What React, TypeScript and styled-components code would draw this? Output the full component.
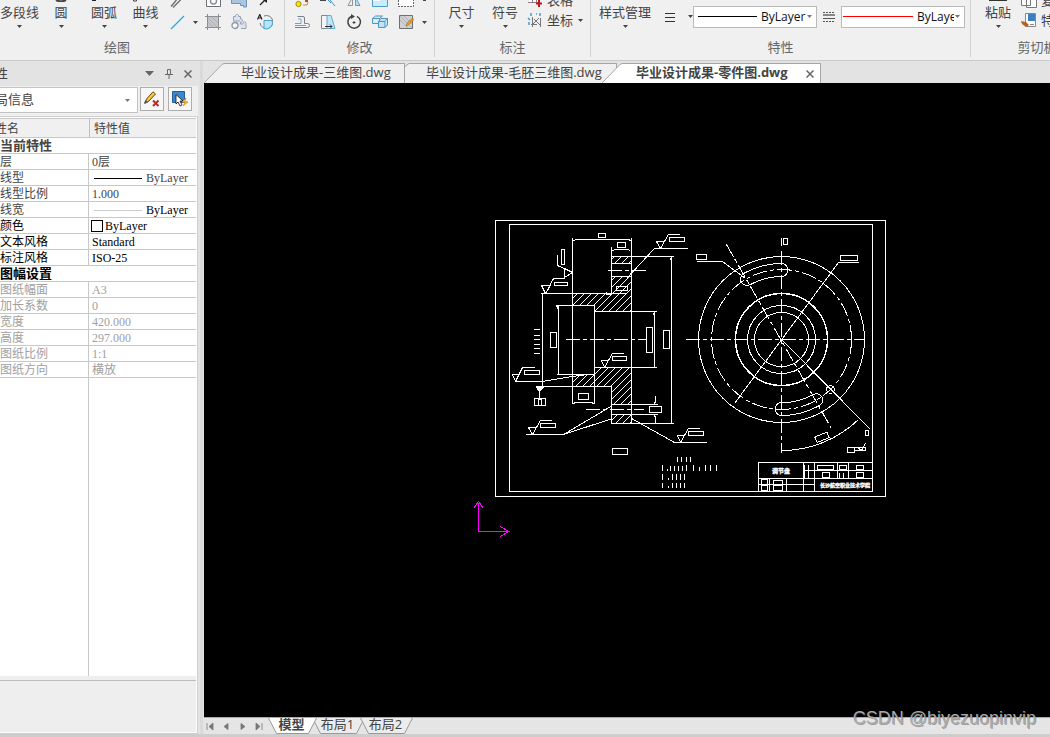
import React from "react";
import styled, { createGlobalStyle } from "styled-components";

const GlobalStyle = createGlobalStyle`
  * { box-sizing: border-box; }
  body { margin: 0; overflow: hidden; }
  button, select { font: inherit; color: inherit; margin: 0; padding: 0; border: 0; background: none; }
  svg { display: block; flex: none; }
`;

const Page = styled.div`
  position: relative;
  display: flex;
  flex-direction: column;
  height: 100vh;
  background: #f0f0f0;
  color: #444;
  font-family: "Open Sans", "Noto Sans CJK SC", sans-serif;
  font-size: 13px;
  line-height: 20px;
`;

/* ---------- ribbon ---------- */

const Ribbon = styled.header`
  display: flex;
  flex: none;
  height: 61px;
  overflow: hidden;
  border-bottom: 1px solid #cacaca;
`;

const Group = styled.section<{ $width?: number }>`
  display: flex;
  flex-direction: column;
  flex: ${(p) => (p.$width ? `0 0 ${p.$width}px` : "1 0 132px")};
  overflow: hidden;
  height: 57px;
  border-right: ${(p) => (p.$width ? "1px solid #d0d0d0" : "0")};
`;

const Tools = styled.div<{ $pad?: number }>`
  display: flex;
  height: 37px;
  padding-left: ${(p) => p.$pad ?? 0}px;
`;

const GroupTitle = styled.h2<{ $inset?: number }>`
  margin: 0;
  padding-right: ${(p) => p.$inset ?? 0}px;
  font-size: 13px;
  font-weight: 400;
  line-height: 20px;
  text-align: center;
  white-space: nowrap;
  color: #666;
`;

const BigButton = styled.button<{ $width: number }>`
  display: flex;
  flex-direction: column;
  align-items: center;
  width: ${(p) => p.$width}px;
  height: 37px;
  white-space: nowrap;
  line-height: 20px;

  & > svg:first-child { height: 2px; }
  & > svg:last-child { margin-top: 3px; }
`;

const IconGrid = styled.div<{ $columns: string }>`
  display: grid;
  grid-template-columns: ${(p) => p.$columns};
  grid-template-rows: 12px 20px;
`;

const IconButton = styled.button<{ $top?: boolean }>`
  display: flex;
  justify-content: center;
  align-items: ${(p) => (p.$top ? "flex-start" : "center")};
  min-width: 0;
  overflow: hidden;
`;

const Rows = styled.div`
  display: grid;
  grid-template-rows: 10px 20px;
  align-items: end;
`;

const RowButton = styled.button`
  display: flex;
  align-items: center;
  gap: 4px;
  height: 20px;
  white-space: nowrap;
`;

const PropertyTools = styled.div`
  display: flex;
  align-items: center;
  height: 33px;
`;

const Combo = styled.label<{ $pad: number }>`
  display: flex;
  align-items: center;
  width: 124px;
  height: 22px;
  padding: 0 4px 0 ${(p) => p.$pad}px;
  border: 1px solid #bababa;
  background: #fff;
  color: #111;
  font-size: 12px;

  & > svg:first-child { margin-right: 4px; }
`;

const ComboSelect = styled.select`
  flex: 1;
  min-width: 0;
  height: 20px;
  margin-right: 1px;
  appearance: none;
  outline: 0;
  overflow: hidden;
`;

const Spacer = styled.span<{ $width: number }>`
  flex: 0 0 ${(p) => p.$width}px;
  display: flex;
  justify-content: center;
`;

const Caret = ({ color = "#444" }: { color?: string }) => (
  <svg width="5" height="3" viewBox="0 0 5 3">
    <path d="M0 0h5L2.500 3z" fill={color} />
  </svg>
);

type IconProps = { h?: number; children?: React.ReactNode; w?: number };
const Icon = ({ w = 16, h = 16, children }: IconProps) => (
  <svg width={w} height={h} viewBox={`0 0 ${w} ${h}`} fill="none" stroke="#6a7078">
    {children}
  </svg>
);

const drawTop = [
  <Icon h={8}><path d="M1 6.500 6.500 0M3 7.500 10.500 0" strokeWidth="1.400" /></Icon>,
  <span />,
  <Icon h={8}><path d="M1.500 0v6.500h14V0" fill="#fff" /><circle cx="8.500" cy="1" r="3" stroke="#8a9098" strokeWidth="1.500" /></Icon>,
  <Icon h={8}><path d="M0 0h16v3H0z" fill="#9fbad0" stroke="none" /><path d="M.5 0v3.500h9V5.500h3V7h3V0" fill="#a9c6de" stroke="#6d94b5" /></Icon>,
  <Icon h={8}><path d="M3 5 8 0" stroke="#222" strokeWidth="1.300" /><path d="M6 0h4v3z" fill="#222" stroke="none" /></Icon>,
];

const drawBottom = [
  <Icon><path d="M1 15 14 2" stroke="#29a8e0" strokeWidth="1.300" /></Icon>,
  <Caret />,
  <Icon>
    <path d="M2.500 2.500h11v11h-11z" fill="#c3c6ca" stroke="#777" />
    <path d="M0 2.500h16M0 13.500h16M2.500 0v16M13.500 0v16" stroke="#8b8e92" />
    <path d="m3 8 5 5M3 4l9 9M7 3l6 6" stroke="#a4a8ad" strokeWidth=".7" />
  </Icon>,
  <Icon>
    <path d="M2.500 7V2.500h2a1.600 1.600 0 1 1 3 0h2V5a1.600 1.600 0 1 1 0 3v2h2.500a1.600 1.600 0 1 1 3 0v4.500H10M2.500 7H9" fill="#dde3ee" stroke="#98a2b2" />
    <circle cx="4" cy="11.500" r="3" fill="#f5f7fa" stroke="#8e98a6" strokeWidth="1.300" />
  </Icon>,
  <Icon>
    <path d="M7 2a6.500 6.500 0 1 1-4 7" stroke="#777" />
    <path d="M7 6.500h8.200A6.500 6.500 0 0 1 7 14.700z" fill="#b8e4f7" stroke="#4aa3cf" />
    <path d="M.5 5.500 2.800.5 5 5.500M1.500 4h3" stroke="#222" strokeWidth="1.200" />
  </Icon>,
];

const modifyTop = [
  <Icon h={8}><circle cx="4.500" cy="4" r="2.600" fill="#ffe600" stroke="#a08a10" /><path d="M9 5h4l1-3" stroke="#c98b2b" /><path d="M11 0h3v2h-3z" fill="#b34a1a" stroke="none" /></Icon>,
  <Icon h={8}><path d="M0 .5h6" stroke="#444" /><path d="m8 0 3 3M10 0l5 6" stroke="#3f8fca" /></Icon>,
  <Icon h={8}><path d="M6.500 0v5.500H2L5 0" stroke="#8c949c" /><path d="M9.500 0v5.500H14L11 0" fill="#b9dcf1" stroke="#5b9dcb" /></Icon>,
  <Icon h={8}><path d="M.5 0v6.500h15V0" fill="#c9ecfb" stroke="#4e9cc8" /><path d="M1 .5h7" stroke="#fff" /></Icon>,
  <Icon h={8}><path d="M.5 0v6.500h15V0" fill="#fff" stroke="#666" strokeDasharray="2 1" /></Icon>,
  <svg width="5" height="1"><path d="M1 0h3v1H1z" fill="#444" /></svg>,
];

const modifyBottom = [
  <Icon>
    <path d="M1 13.500h12.500a2 2 0 0 0 0-4H10.500V4a1.500 1.500 0 0 0-1.500-1.500H3.500" stroke="#777f88" />
    <path d="M1 11.500h11M1 9.500h6V5H4" stroke="#6aa6d4" />
  </Icon>,
  <Icon>
    <path d="M1.500 1.500h8v13h-8z" stroke="#888" fill="#f4f4f4" />
    <path d="M7 1.500h4l4 13H7z" fill="#c3e6f6" stroke="#62a9d0" />
    <path d="M5 12.500h7m-2-2 2 2-2 2" stroke="#333" />
  </Icon>,
  <Icon>
    <path d="M5 2.500A6.300 6.300 0 1 0 11 2.300" stroke="#444" strokeWidth="1.500" />
    <path d="m5 0 4 2.500L5 5z" fill="#444" stroke="none" />
    <path d="M8 7v3M6.500 8.500h3" stroke="#444" />
  </Icon>,
  <Icon>
    <path d="M.5 4.500h7v5h-7zM.5 4.500l3-2.500h7l-3 2.500" fill="#d6eef9" stroke="#4e94bd" />
    <path d="M6.500 7.500h6.500v6H6.500zM6.500 7.500l2.500-3h6.500l-2.500 3M15.500 4.500v6.500l-2.500 2.500" fill="#bde4f6" stroke="#4e94bd" />
  </Icon>,
  <Icon>
    <path d="M1.500 1.500h13v13h-13z" fill="#cfd1d3" stroke="#6c6f73" />
    <path d="m2 6 8 8M2 2l12 12M6 2l8 8" stroke="#a9acb0" strokeWidth=".8" />
    <path d="m8 12 1-3 5.500-5 1.500 1.500L10.500 11z" fill="#e59a2e" stroke="#b06d12" strokeWidth=".6" />
  </Icon>,
  <Caret />,
];

/* ---------- work area ---------- */

const Body = styled.div`
  display: flex;
  flex: 1;
  min-height: 0;
  background: #e3e3e3;
`;

const Panel = styled.aside`
  display: flex;
  flex-direction: column;
  flex: none;
  width: 198px;
  margin-right: 2px;
`;

const Gutter = styled.div`
  flex: 0 0 3px;
  margin-right: 1px;
  background: #dadada;
`;

const PanelTitle = styled.div`
  display: flex;
  align-items: center;
  flex: none;
  height: 25px;
  padding-right: 1px;
  line-height: 24px;

  & > span { flex: 1; height: 25px; margin-left: -5px; }
`;

const PanelButton = styled.button`
  display: flex;
  align-items: center;
  justify-content: center;
  width: 19px;
  height: 20px;
`;

const PanelTools = styled.div`
  display: flex;
  flex: none;
  height: 30px;
  padding-top: 1px;
  background: #f0f0f0;
`;

const ObjectCombo = styled.label`
  display: flex;
  align-items: center;
  width: 138px;
  height: 26px;
  padding-right: 7px;
  margin-right: 2px;
  border: 1px solid #c3c3c3;
  border-left: 0;
  background: #fff;

  & > select {
    flex: 1;
    min-width: 0;
    height: 24px;
    padding-bottom: 2px;
    appearance: none;
    text-indent: -5px;
    outline: 0;
  }
`;

const ToolButton = styled.button`
  display: flex;
  align-items: center;
  justify-content: center;
  width: 24px;
  height: 24px;
  margin-right: 4px;
  border: 1px solid #adadad;
  background: #f7f7f7;
`;

const Sheet = styled.div`
  display: flex;
  flex-direction: column;
  flex: 1;
  min-height: 0;
  padding: 1px 1px 1px 0;
  border: 1px solid #cfcfcf;
  border-left: 0;
  background: #fff;
`;

const PropTable = styled.table`
  width: 100%;
  table-layout: fixed;
  border-spacing: 0;
  font-family: "Liberation Serif", "Noto Sans CJK SC", serif;
  font-size: 12px;
  line-height: 14px;
  white-space: nowrap;

  th, td { padding: 1px 0 0; text-align: left; overflow: hidden; }
  thead th {
    height: 20px;
    border-top: 1px solid #c8c8c8;
    border-bottom: 1px solid #c8c8c8;
    background: #f0f0f0;
    font-weight: 400;
  }
  thead th:first-child { width: 90px; border-right: 1px solid #c0c0c0; text-indent: -5px; }
  thead th:last-child { padding-left: 4px; }
`;

const PropRow = styled.tr<{ $tone: string }>`
  color: ${(p) => p.$tone};

  & > * { height: 16px; border-bottom: 1px solid #c8c8c8; font-weight: 400; }
  & > th[colspan] { font-weight: 700; font-size: 13px; }
  & > td { padding-left: 2px; }
`;

const Cell = styled.span`
  display: block;
  width: 89px;
  height: 15px;
  margin-top: -1px;
  padding-top: 1px;
  border-right: 1px solid #c8c8c8;
`;

const Value = styled.span<{ $tone?: string }>`
  display: flex;
  align-items: center;
  height: 14px;
  gap: 4px;
  color: ${(p) => p.$tone ?? "inherit"};
`;

const Swatch = styled.span`
  width: 12px;
  height: 12px;
  margin: 0 -2px 0 -1px;
  border: 1px solid #000;
`;

const Rest = styled.div`
  flex: 1;
  width: 89px;
  border-right: 1px solid #c8c8c8;
`;

const Description = styled.div`
  flex: 0 0 56px;
  padding-top: 4px;
  background: #eee;

  &::before { content: ""; display: block; border-top: 1px solid #bdbdbd; }
`;

const Main = styled.main`
  display: flex;
  flex-direction: column;
  flex: 1;
  min-width: 0;
`;

const TabBar = styled.nav`
  display: flex;
  flex: none;
  height: 22px;
  padding-top: 2px;
`;

const Tab = styled.button<{ $active?: boolean; $width: number; $overlap?: number }>`
  display: flex;
  width: ${(p) => p.$width}px;
  height: 20px;
  margin-left: ${(p) => -(p.$overlap ?? 0)}px;
  position: relative;
  font-weight: ${(p) => (p.$active ? 700 : 400)};
  line-height: 16px;
  white-space: nowrap;
`;

const TabFace = styled.span<{ $active?: boolean; $pad: number }>`
  display: flex;
  align-items: flex-start;
  justify-content: space-between;
  flex: 1;
  height: 20px;
  padding: 0 6px 0 ${(p) => p.$pad}px;
  border-top: 1px solid #a6a6a6;
  border-right: 1px solid #a6a6a6;
  background: ${(p) => (p.$active ? "#fff" : "#f0f0f0")};

  & > svg { margin-top: 6px; }
`;

const Canvas = styled.div`
  display: flex;
  flex: 1;
  min-height: 0;
  background: #000;

  & > svg { flex: 1; min-width: 0; height: 100%; }
`;

const SheetBar = styled.nav`
  display: flex;
  flex: none;
  height: 17px;
  border-top: 1px solid #aaa;
  background: #e5e5e5;
`;

const PageButtons = styled.div`
  display: flex;
  width: 64px;
`;

const NavButton = styled.button`
  display: flex;
  align-items: center;
  flex: 1;
  padding-left: 2px;
  height: 17px;
`;

const SheetTab = styled.button<{ $active?: boolean; $width: number }>`
  position: relative;
  z-index: ${(p) => (p.$active ? 1 : 0)};
  width: ${(p) => p.$width}px;
  height: 16px;
  margin-right: -5px;
  padding-right: 2px;
  font-weight: ${(p) => (p.$active ? 700 : 400)};
  line-height: 12px;

  & > svg { position: absolute; left: 0; top: 0; }
  & > span { position: relative; display: block; height: 16px; }
`;

const BottomEdge = styled.footer`
  flex: 0 0 3px;
  background: #cdcdcd;
`;

const Watermark = styled.div`
  position: absolute;
  right: 14px;
  bottom: 8px;
  font-family: "Liberation Sans", sans-serif;
  font-size: 18px;
  line-height: 22px;
  color: #a8a8a8;
  text-shadow: 1px 1px 0 rgba(90, 90, 90, 0.5);
`;

/* ---------- drawing ---------- */

type Box = [number, number, number, number];

const boxes: Box[] = [
  [495, 220, 390, 276], [509, 224, 363, 267],
  [598, 233, 7, 4], [617, 242, 8, 5], [561, 249, 3, 15], [554, 282, 13, 3], [669, 237, 15, 4],
  [616, 286, 11, 4], [550, 332, 6, 15], [646, 327, 6, 25], [663, 330, 6, 18], [612, 356, 14, 4],
  [524, 370, 15, 4], [534, 398, 11, 7], [538, 399, 3, 6], [578, 393, 10, 6], [649, 406, 12, 6],
  [540, 423, 15, 4], [688, 431, 15, 4], [612, 448, 15, 6],
  [696, 254, 10, 5], [840, 255, 17, 5], [783, 238, 4, 6], [865, 430, 3, 5], [847, 447, 7, 5], [854, 447, 11, 3],
  [817, 465, 16, 4], [839, 465, 7, 4], [856, 465, 7, 4], [822, 472, 7, 5], [856, 472, 7, 5],
  [761, 479, 6, 5], [773, 480, 9, 4], [761, 485, 6, 5], [773, 485, 9, 5],
];

const lines = [
  // flange section outline and extension lines
  "M572 237V403M631 237V423M611 246V293M611 386V423M594 305V403M542 293V386M558 305V374",
  "M671 256V423M654 311V367M573 240l3-1H627l4 1M612 250l3-1H627l3 1",
  "M611 256H673M611 263H631M611 276H631M540 293H626M594 311H656M556 305H594M556 374H594",
  "M535 386H611M594 367H656M611 404H657M611 414H657M611 423H673M572 403l4-1H590l4 1",
  "M655 395v5l-1 4M655 423v-5l-1-4M606 291v3H611M558 309l-2-4M670 260l1-4M653 315l1-4",
  // surface finish symbols and leaders
  "M557 254V265L572 272M564 268 572 272 564 277Z",
  "M541 285H550L545 293ZM545 293 553 278H564",
  "M656 241H664L660 248ZM660 248 668 234H679M687 248H654L626 278",
  "M601 360H608L604 367ZM604 367 612 353H623",
  "M512 374H519L515 381ZM515 381 522 367H534M515 381H541L572 376 587 374",
  "M528 427H536L532 434ZM532 434 540 420H551M525 434H563L612 405M563 434 612 418",
  "M677 435H684L680 442ZM680 442 688 428H699M706 442H674L631 418",
  "M539 387V398M533 329h6M533 335h6M533 339h6M533 344h6M533 348h6M533 353h6",
  // notes
  "M677 456v5M681 456v5M686 456v5M690 456v5",
  "M662 464v6M667 468v2M670 465v5M674 465v5M678 465v5M682 465v5M686 464v6M693 464v6M699 466v4M705 464v6M710 464v6M716 464v6",
  "M662 473v6M668 477v2M672 473v6M676 473v6M680 473v6M684 473v6",
  "M662 482v5M668 485v2M672 482v5M676 482v5M680 482v5M684 482v5",
  // front view leaders
  "M696 261H722L745 278M858 262H838L734 403M781 339 870 429M781 450A111 111 0 0 0 858 419M865 443l-4 7-4-3",
  // slots
  "M743 273A76 76 0 0 1 781 263A6 6 0 0 1 781 276A63 63 0 0 0 750 284A6 6 0 0 1 743 273",
  "M781 402A63 63 0 0 0 813 394A6 6 0 0 1 819 405A76 76 0 0 1 781 415A6 6 0 0 1 781 402",
  // title block
  "M758 491V462H872M758 478H872M758 484H814M803 462V491M814 462V491M803 470H872M837 462V478M848 462V478",
  "M804 464v13M808 464v13M839 472v5M843 472v5M769 478V491M786 478V491",
];

// 45 degree section lines, seven units apart, clipped to the cut faces
const hatch = Array.from({ length: 36 }, (_, i) => {
  const x = 404 + i * 7;
  return `M${x} 424L${x + 168} 256`;
}).join("");

const Drawing = () => (
  <svg viewBox="204 83 846 634" role="img" aria-label="零件图" shapeRendering="crispEdges">
    <defs>
      <clipPath id="cut">
        <path d="M572 293H611V276H631V311H594V305H572ZM611 256H631V263H611ZM611 414H631V423H611ZM572 374H594V367H631V404H611V386H572Z" />
      </clipPath>
    </defs>
    <g transform="translate(.5 .5)" fill="none" stroke="#fff">
      <path d={hatch} clipPath="url(#cut)" />
      {boxes.map(([x, y, w, h]) => (
        <rect key={`${x}-${y}`} x={x} y={y} width={w} height={h} />
      ))}
      {lines.map((d) => (
        <path key={d} d={d} />
      ))}
      <path d="M536 387H543L539 391Z" fill="#fff" />
      <circle cx="781" cy="339" r="83" />
      <circle cx="781" cy="339" r="70" strokeDasharray="15 3 4 3" />
      <circle cx="781" cy="339" r="46" strokeWidth="1.500" />
      <circle cx="781" cy="339" r="34" />
      <circle cx="781" cy="339" r="27" />
      <circle cx="830" cy="389" r="4" />
      <path d="m828 387 4 4m0-4-4 4" />
      <rect x="815" y="434" width="13" height="6" transform="rotate(-22 821 437)" />
      <g strokeDasharray="14 3 4 3">
        <path d="M565 339H645M607 270H648M585 409H643M685 339H864M781 250V452M726 244 831 428" />
      </g>
      <path d="M781 237v8" />
      <path d="M478 531V502M473 508l5-7 5 7M478 531H509M500 526l8 5-8 5" stroke="#f0f" />
    </g>
    <g fill="#fff" stroke="#fff" strokeWidth=".3" fontFamily="'Noto Sans CJK SC', sans-serif" fontWeight="700" textAnchor="middle">
      <text x="781" y="473" fontSize="6">调节盘</text>
      <text x="845" y="487" fontSize="5">长沙航空职业技术学院</text>
    </g>
  </svg>
);

/* ---------- property rows ---------- */

const GREY = "#444";
const BLACK = "#000";
const DIM = "#a0a0a0";

const Sample = ({ color }: { color: string }) => (
  <svg width="50" height="1"><path d="M2 .5h48" stroke={color} /></svg>
);

const rows: { name: string; value?: React.ReactNode; tone: string }[] = [
  { name: "当前特性", tone: GREY },
  { name: "层", value: "0层", tone: GREY },
  { name: "线型", value: <Value><Sample color="#000" />ByLayer</Value>, tone: GREY },
  { name: "线型比例", value: "1.000", tone: GREY },
  { name: "线宽", value: <Value $tone="#000"><Sample color="#ccc" />ByLayer</Value>, tone: GREY },
  { name: "颜色", value: <Value><Swatch />ByLayer</Value>, tone: BLACK },
  { name: "文本风格", value: "Standard", tone: BLACK },
  { name: "标注风格", value: "ISO-25", tone: BLACK },
  { name: "图幅设置", tone: BLACK },
  { name: "图纸幅面", value: "A3", tone: DIM },
  { name: "加长系数", value: "0", tone: DIM },
  { name: "宽度", value: "420.000", tone: DIM },
  { name: "高度", value: "297.000", tone: DIM },
  { name: "图纸比例", value: "1:1", tone: DIM },
  { name: "图纸方向", value: "横放", tone: DIM },
];

const navIcons: [string, string][] = [
  ["第一页", "M1 1v7M7 1v7L3 4.500z"],
  ["上一页", "M6 1.500v6L2 4.500z"],
  ["下一页", "M3 1.500v6l4-3z"],
  ["最后一页", "M8 1v7M2 1v7l4-3.500z"],
];

const sheets = [
  { name: "模型", width: 49, active: true },
  { name: "布局1", width: 53 },
  { name: "布局2", width: 53 },
];

const Slant = ({ fill }: { fill: string }) => (
  <svg width="20" height="20" viewBox="0 0 20 20">
    <path d="M0 20 18 1.500 20 .5V20z" fill={fill} />
    <path d="M0 20 18 1.500 20 .5" fill="none" stroke="#a6a6a6" />
  </svg>
);

export default function App() {
  return (
    <Page>
      <GlobalStyle />
      <Ribbon>
        <Group $width={285}>
          <Tools>
            <BigButton $width={39}><Icon h={2} w={6} />多段线<Caret /></BigButton>
            <BigButton $width={44}><Icon h={2} w={12}><path d="M1 0c3 1.500 7 1.500 10 0" stroke="#444" strokeWidth="2" /></Icon>圆<Caret /></BigButton>
            <BigButton $width={42}><Icon h={2} w={28}><path d="M2 0h4v1H2z" fill="#222" stroke="none" /></Icon>圆弧<Caret /></BigButton>
            <BigButton $width={41}><Icon h={2} w={28}><path d="M1.500 0v1h3V0" stroke="#444" /></Icon>曲线<Caret /></BigButton>
            <IconGrid $columns="24px 10px 26px 26px 26px">
              {drawTop.map((icon, i) => <IconButton key={i} $top>{icon}</IconButton>)}
              {drawBottom.map((icon, i) => <IconButton key={i}>{icon}</IconButton>)}
            </IconGrid>
          </Tools>
          <GroupTitle $inset={50}>绘图</GroupTitle>
        </Group>
        <Group $width={150}>
          <Tools $pad={4}>
            <IconGrid $columns="26px 26px 26px 26px 26px 10px">
              {modifyTop.map((icon, i) => <IconButton key={i} $top>{icon}</IconButton>)}
              {modifyBottom.map((icon, i) => <IconButton key={i}>{icon}</IconButton>)}
            </IconGrid>
          </Tools>
          <GroupTitle>修改</GroupTitle>
        </Group>
        <Group $width={156}>
          <Tools $pad={5}>
            <BigButton $width={43}><Icon h={2} />尺寸<Caret /></BigButton>
            <BigButton $width={44}><Icon h={2} />符号<Caret /></BigButton>
            <Rows>
              <RowButton>
                <Icon>
                  <path d="M2 5h10v6H2z" fill="#fff" stroke="none" />
                  <path d="M1 7.500h13M1 10.500h10M5.500 5v6M9.500 5v6" stroke="#8a7d86" />
                  <path d="M12 8v7M9 11.500h6" stroke="#c11421" strokeWidth="2" />
                </Icon>
                表格
              </RowButton>
              <RowButton>
                <Icon>
                  <path d="M5.500 5v10M4 12.500h6M5.500 12.500 12 6M7 7l6 6M13.500 6v9" stroke="#777" />
                  <path d="M4 1v3M9 2h1M13 1v3M1 6l2 2M2 10v3" stroke="#4a9bd0" strokeWidth="1.500" />
                </Icon>
                坐标
                <Spacer $width={6}><Caret /></Spacer>
              </RowButton>
            </Rows>
          </Tools>
          <GroupTitle>标注</GroupTitle>
        </Group>
        <Group $width={380}>
          <Tools $pad={6}>
            <BigButton $width={56}><Icon h={2} />样式管理<Caret /></BigButton>
            <PropertyTools>
              <Spacer $width={34}>
                <Icon><path d="M3 4.500h10M3 8.500h10M3 12.500h10" stroke="#333" /></Icon>
              </Spacer>
              <Spacer $width={6}><Caret /></Spacer>
            </PropertyTools>
            <PropertyTools>
              <Combo $pad={4}>
                <svg width="59" height="1"><path d="M0 .5h59" stroke="#000" /></svg>
                <ComboSelect aria-label="线型"><option>ByLayer</option></ComboSelect>
                <Caret color="#777" />
              </Combo>
              <Spacer $width={24}>
                <Icon>
                  <path d="M2 3.500h12M2 12.500h12" stroke="#555" strokeDasharray="2 1" />
                  <path d="M2 6h12" stroke="#888" strokeWidth="2" />
                  <path d="M2 9.500h12" stroke="#555" />
                </Icon>
              </Spacer>
              <Combo $pad={1}>
                <svg width="70" height="1"><path d="M0 .5h70" stroke="#f00" /></svg>
                <ComboSelect aria-label="线宽"><option>ByLayer</option></ComboSelect>
                <Caret color="#777" />
              </Combo>
            </PropertyTools>
          </Tools>
          <GroupTitle>特性</GroupTitle>
        </Group>
        <Group>
          <Tools $pad={4}>
            <BigButton $width={46}><Icon h={2} w={18}><path d="M0 .5h18" stroke="#333" /></Icon>粘贴<Caret /></BigButton>
            <Rows>
              <RowButton>
                <Icon><path d="M.5 0v13.500h9V0M5.500 0v15.500h10V0" fill="#fff" stroke="#777" /></Icon>
                复制
              </RowButton>
              <RowButton>
                <Icon>
                  <path d="M4.500 1.500h10v13h-10z" fill="#fff" stroke="#888" />
                  <path d="M7 2h7v7H7z" fill="#3f7fbd" stroke="none" />
                  <path d="M9 12.500h4" stroke="#888" />
                  <path d="m0 9 5 1 3 3-3 2-4-3z" fill="#b5651d" stroke="none" />
                </Icon>
                特性匹配
              </RowButton>
            </Rows>
          </Tools>
          <GroupTitle>剪切板</GroupTitle>
        </Group>
      </Ribbon>

      <Body>
        <Panel>
          <PanelTitle>
            <span>性</span>
            <PanelButton aria-label="菜单"><svg width="9" height="5"><path d="M0 0h9L4.500 5z" fill="#666" /></svg></PanelButton>
            <PanelButton aria-label="固定">
              <Icon w={8} h={10}><path d="M2.500 5.500v-5h3v5M0 5.500h8M4 6v4M5.500 1v4" stroke="#666" /></Icon>
            </PanelButton>
            <PanelButton aria-label="关闭">
              <Icon w={8} h={8}><path d="m.5.5 7 7m0-7-7 7" stroke="#666" strokeWidth="1.500" /></Icon>
            </PanelButton>
          </PanelTitle>
          <PanelTools>
            <ObjectCombo>
              <select aria-label="对象"><option>局信息</option></select>
              <Caret color="#777" />
            </ObjectCombo>
            <ToolButton aria-label="清除">
              <Icon>
                <path d="M1 12 2.500 8 9 .8 11.500 3 5 10z" fill="#f5c542" stroke="#6b4a12" />
                <path d="m.5 12.500 1-3L4 11z" fill="#222" />
                <path d="m9 9.500 5.500 5.500m0-5.500L9 15" stroke="#c1272d" strokeWidth="2" />
              </Icon>
            </ToolButton>
            <ToolButton aria-label="快速选择">
              <Icon>
                <path d="M.5.500h12v11H.5z" fill="#3c87cc" stroke="#245d97" />
                <path d="M4 3.500v9.500l2-2 2 4 2-1-2-4h3z" fill="#fff" stroke="#111" strokeWidth=".8" />
                <path d="m14 7-4 4 3 .5-2 3.500 5-4-3-.5z" fill="#ffc21a" stroke="#d97b0b" strokeWidth=".6" />
              </Icon>
            </ToolButton>
          </PanelTools>
          <Sheet>
            <PropTable>
              <thead>
                <tr><th>性名</th><th>特性值</th></tr>
              </thead>
              <tbody>
                {rows.map((r) => (
                  <PropRow key={r.name} $tone={r.tone}>
                    {r.value === undefined ? (
                      <th colSpan={2}>{r.name}</th>
                    ) : (
                      <>
                        <th scope="row"><Cell>{r.name}</Cell></th>
                        <td>{r.value}</td>
                      </>
                    )}
                  </PropRow>
                ))}
              </tbody>
            </PropTable>
            <Rest />
            <Description />
          </Sheet>
        </Panel>
        <Gutter />
        <Main>
          <TabBar>
            <Tab $width={201}>
              <Slant fill="#f0f0f0" />
              <TabFace $pad={17}>毕业设计成果-三维图.dwg</TabFace>
            </Tab>
            <Tab $width={212}>
              <svg width="5" height="20" viewBox="0 0 5 20">
                <path d="M0 3.500 4 .5H5V20H0z" fill="#f0f0f0" />
                <path d="M0 3.500 4 .5H5" fill="none" stroke="#a6a6a6" />
              </svg>
              <TabFace $pad={16}>毕业设计成果-毛胚三维图.dwg</TabFace>
            </Tab>
            <Tab $width={219} $overlap={15} $active>
              <Slant fill="#fff" />
              <TabFace $pad={14} $active>
                毕业设计成果-零件图.dwg
                <Icon w={8} h={8}><path d="m.5.500 7 7m0-7-7 7" stroke="#666" strokeWidth="1.500" /></Icon>
              </TabFace>
            </Tab>
          </TabBar>
          <Canvas><Drawing /></Canvas>
          <SheetBar>
            <PageButtons>
              {navIcons.map(([label, d]) => (
                <NavButton key={label} aria-label={label}>
                  <svg width="9" height="9"><path d={d} fill="#777" stroke="#777" strokeWidth=".8" /></svg>
                </NavButton>
              ))}
            </PageButtons>
            {sheets.map((s) => (
              <SheetTab key={s.name} $width={s.width} $active={s.active}>
                <svg width={s.width} height="16">
                  <path d={`M.5 0 8.500 15.500H${s.width - 8.5}L${s.width - 0.5} 0`} fill={s.active ? "#fff" : "#ececec"} stroke="#999" />
                </svg>
                <span>{s.name}</span>
              </SheetTab>
            ))}
          </SheetBar>
        </Main>
      </Body>
      <BottomEdge />
      <Watermark>CSDN @biyezuopinvip</Watermark>
    </Page>
  );
}
